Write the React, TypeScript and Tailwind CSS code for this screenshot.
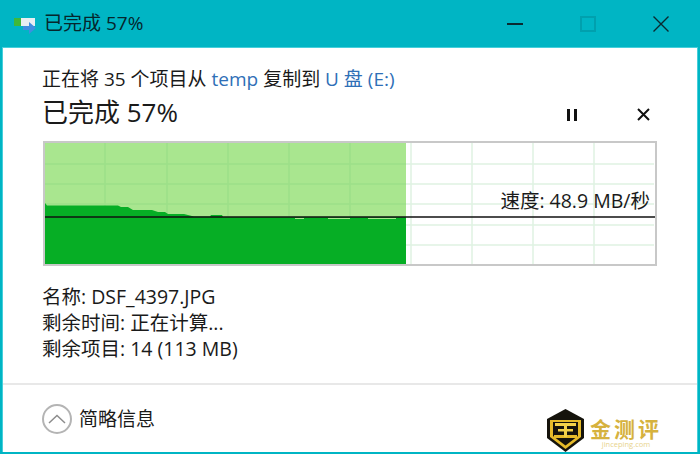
const fontStack = { fontFamily: '"Open Sans", "Noto Sans CJK SC", sans-serif' };

function CopyIcon() {
  return (
    <svg width="24" height="20" viewBox="0 0 24 20" className="shrink-0">
      <rect x="1" y="4" width="21" height="8" fill="#e8eef2" />
      <rect x="1" y="4" width="7" height="8" fill="#3fb83a" />
      <path d="M10 12h6V8l7 6-7 6v-4h-6z" fill="#3f8ee0" />
    </svg>
  );
}

function Chart() {
  const vLines = [105, 167, 228, 289, 350, 411, 472, 533, 594];
  const hLines = [164, 184, 204, 225, 245];
  return (
    <svg width="614" height="125" viewBox="43 141 614 125" className="block">
      <rect x="43" y="141" width="614" height="125" fill="#fff" />
      <rect x="44" y="142" width="612" height="123" fill="none" stroke="#c8c8c8" strokeWidth="2" />
      {vLines.map((x) => (
        <line key={x} x1={x} y1="143" x2={x} y2="264" stroke="#dff2e2" strokeWidth="1.5" />
      ))}
      {hLines.map((y) => (
        <line key={y} x1="45" y1={y} x2="654" y2={y} stroke="#dff2e2" strokeWidth="1.5" />
      ))}
      <rect x="45" y="143" width="361" height="121" fill="#a9e68f" />
      {vLines.filter((x) => x < 406).map((x) => (
        <line key={x} x1={x} y1="143" x2={x} y2="264" stroke="#9cdf88" strokeWidth="1.5" />
      ))}
      {hLines.map((y) => (
        <line key={y} x1="45" y1={y} x2="406" y2={y} stroke="#9cdf88" strokeWidth="1.5" />
      ))}
      <path
        d="M45 203L47 205.500H118L121 207H128L133 210H152L158 212H165L168 214H184L194 216.500H210L211 215H222L223 217H406V264H45Z"
        fill="#06ae25"
      />
      <rect x="295" y="218" width="9" height="1" fill="#a9e68f" />
      <rect x="328" y="218" width="22" height="1" fill="#a9e68f" />
      <rect x="368" y="218" width="28" height="1" fill="#a9e68f" />
      <line x1="45" y1="217" x2="655" y2="217" stroke="#111" strokeWidth="1.5" />
    </svg>
  );
}

function Logo() {
  return (
    <div className="flex items-end gap-[6px] self-end">
      <svg width="37" height="43" viewBox="0 0 37 43" className="block">
        <path d="M18.500 0L37 10V29L18.500 43L0 29V10Z" fill="#15130c" />
        <path d="M3 11H34V28L18.500 40L3 28Z" fill="#e6bb2a" />
        <path d="M6 13H31V27L18.500 36.500L6 27Z" fill="#15130c" />
        <rect x="8" y="14" width="21" height="3" fill="#f2d14a" />
        <rect x="11" y="20" width="15" height="2.500" fill="#f2d14a" />
        <rect x="7" y="26" width="23" height="3" fill="#e6bb2a" />
        <rect x="17" y="14" width="3" height="14" fill="#f2d14a" />
      </svg>
      <div className="mb-[4px] flex flex-col items-center">
        <div className="text-[21px] leading-[21px] font-bold tracking-[3px] text-[#d6b23e]">金测评</div>
        <div className="text-[7.500px] leading-[8px] text-[#e8d38c]">jinceping.com</div>
      </div>
    </div>
  );
}

export default function App() {
  return (
    <div className="flex h-[454px] w-[700px] flex-col overflow-hidden bg-[#00b5c4]" style={fontStack}>
      <div className="flex h-[47px] items-center pl-[13px] text-[#06262c]">
        <CopyIcon />
        <span className="ml-[7px] text-[19px] leading-none">已完成 57%</span>
        <div className="ml-auto flex items-center">
          <div className="mr-[57px] h-[2px] w-[16px] bg-[#0a2a30]" />
          <div className="mr-[57px] h-[16px] w-[16px] border-2 border-[#00a0ae]" />
          <svg width="16" height="16" viewBox="0 0 16 16" className="mr-[31px]">
            <path d="M0.500 0.500L15.500 15.500M15.500 0.500L0.500 15.500" stroke="#0a2a30" strokeWidth="1.400" />
          </svg>
        </div>
      </div>

      <div className="mx-[2px] mb-[2px] flex flex-1 flex-col border border-b-0 border-[#46cfdb] bg-white text-[#1a1a1a]">
        <div className="flex h-[335px] flex-col pl-[40px]">
          <div className="mt-[18px] -ml-[1px] text-[19px] leading-[26px] whitespace-pre">
            正在将 35 个项目从 <span className="text-[#2f6fb7]">temp</span> 复制到{" "}
            <span className="text-[#2f6fb7]">U 盘 (E:)</span>
          </div>
          <div className="mt-[3px] -ml-[1px] flex h-[34px] items-center">
            <span className="text-[26px] leading-[34px]">已完成 57%</span>
            <div className="mt-[5px] mr-[47px] ml-auto flex items-center gap-[60px]">
              <div className="flex gap-[4px]">
                <div className="h-[12px] w-[3px] bg-[#111]" />
                <div className="h-[12px] w-[3px] bg-[#111]" />
              </div>
              <svg width="13" height="13" viewBox="0 0 13 13">
                <path d="M1 1L12 12M12 1L1 12" stroke="#111" strokeWidth="2" />
              </svg>
            </div>
          </div>
          <div className="relative mt-[12px] w-[614px]">
            <Chart />
            <span className="absolute top-[47px] right-[7px] text-[19.500px] leading-[26px]">速度: 48.9 MB/秒</span>
          </div>
          <div className="mt-[18px] -ml-[1px] text-[19.500px] leading-[26px]">
            <div>名称: DSF_4397.JPG</div>
            <div>剩余时间: 正在计算...</div>
            <div>剩余项目: 14 (113 MB)</div>
          </div>
        </div>
        <div className="flex flex-1 items-center justify-between border-t-2 border-[#e8e8e8] pr-[35px] pl-[39px]">
          <div className="mt-[1px] flex items-center gap-[7px]">
            <div className="flex size-[30px] items-center justify-center rounded-full border-2 border-[#b4b4b4]">
              <svg width="18" height="10" viewBox="0 0 18 10">
                <path d="M1 9L9 1.500L17 9" fill="none" stroke="#8c8c8c" strokeWidth="1.500" />
              </svg>
            </div>
            <span className="text-[19px] leading-none">简略信息</span>
          </div>
          <Logo />
        </div>
      </div>
    </div>
  );
}
